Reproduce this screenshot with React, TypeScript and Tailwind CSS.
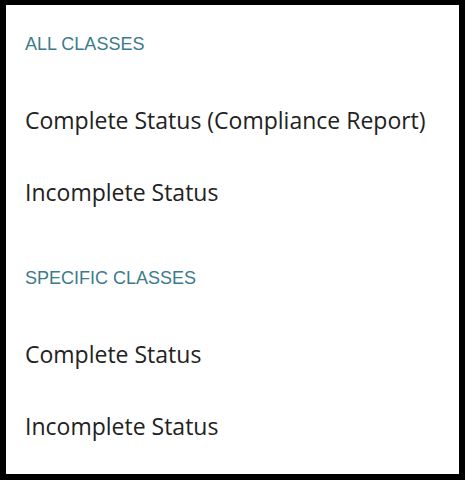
const sections = [
  { title: 'ALL CLASSES', items: ['Complete Status (Compliance Report)', 'Incomplete Status'] },
  { title: 'SPECIFIC CLASSES', items: ['Complete Status', 'Incomplete Status'] },
];

export default function App() {
  return (
    <div className="w-[465px] h-[480px] bg-white border-black border-t-[5px] border-l-[6px] border-r-[6px] border-b-[6px] pl-[19px]">
      {sections.map((s, i) => (
        <div key={s.title} className={i === 0 ? 'pt-[27px]' : 'pt-[38px]'}>
          <div className="font-['Liberation_Sans',Arial,sans-serif] text-[18px] leading-[24px] text-[#3b7b8b]">
            {s.title}
          </div>
          <ul className="mt-[28px]">
            {s.items.map((item) => (
              <li
                key={item}
                className="font-['Open_Sans',sans-serif] text-[23px] leading-[72px] text-[#222222] whitespace-nowrap"
              >
                {item}
              </li>
            ))}
          </ul>
        </div>
      ))}
    </div>
  );
}
